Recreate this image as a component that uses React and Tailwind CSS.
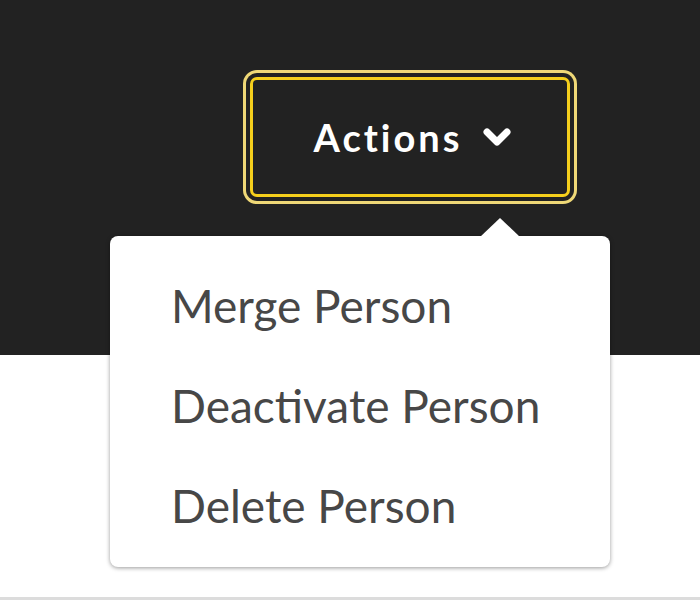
export default function App() {
  return (
    <div className="relative h-[600px] w-[700px] overflow-hidden bg-white font-['Lato',sans-serif]">
      <div className="h-[355px] bg-[#222222] pl-[250px] pt-[77px]">
        <button className="flex h-[120px] w-[320px] items-center justify-center gap-[20px] rounded-[7px] border-[3px] border-[#f5cf1c] bg-[#222222] pl-[6px] text-[38px] font-bold tracking-[3px] text-white ring-[3px] ring-[#efd877] ring-offset-4 ring-offset-[#222222]">
          <span>Actions</span>
          <svg width="30" height="22" viewBox="0 0 30 22" className="mt-[2px]">
            <path d="M5 5 L15 15 L25 5" fill="none" stroke="white" strokeWidth="7" strokeLinecap="round" strokeLinejoin="round" />
          </svg>
        </button>
      </div>
      <div className="h-[242px]" />
      <div className="h-[3px] bg-[#dcdcdc]" />

      <div className="absolute left-[110px] top-[236px] flex h-[331px] w-[500px] flex-col rounded-[8px] bg-white pt-[20px] shadow-[0_1px_4px_rgba(0,0,0,0.4)]">
        <svg width="40" height="19" viewBox="0 0 40 19" className="absolute left-[370px] top-[-18px]">
          <path d="M0 19 L20 0 L40 19 Z" fill="white" />
        </svg>
        {["Merge Person", "Deactivate Person", "Delete Person"].map((t) => (
          <div key={t} className="h-[100px] pl-[61px] text-[46px] leading-[100px] text-[#474747]">
            {t}
          </div>
        ))}
      </div>
    </div>
  );
}
